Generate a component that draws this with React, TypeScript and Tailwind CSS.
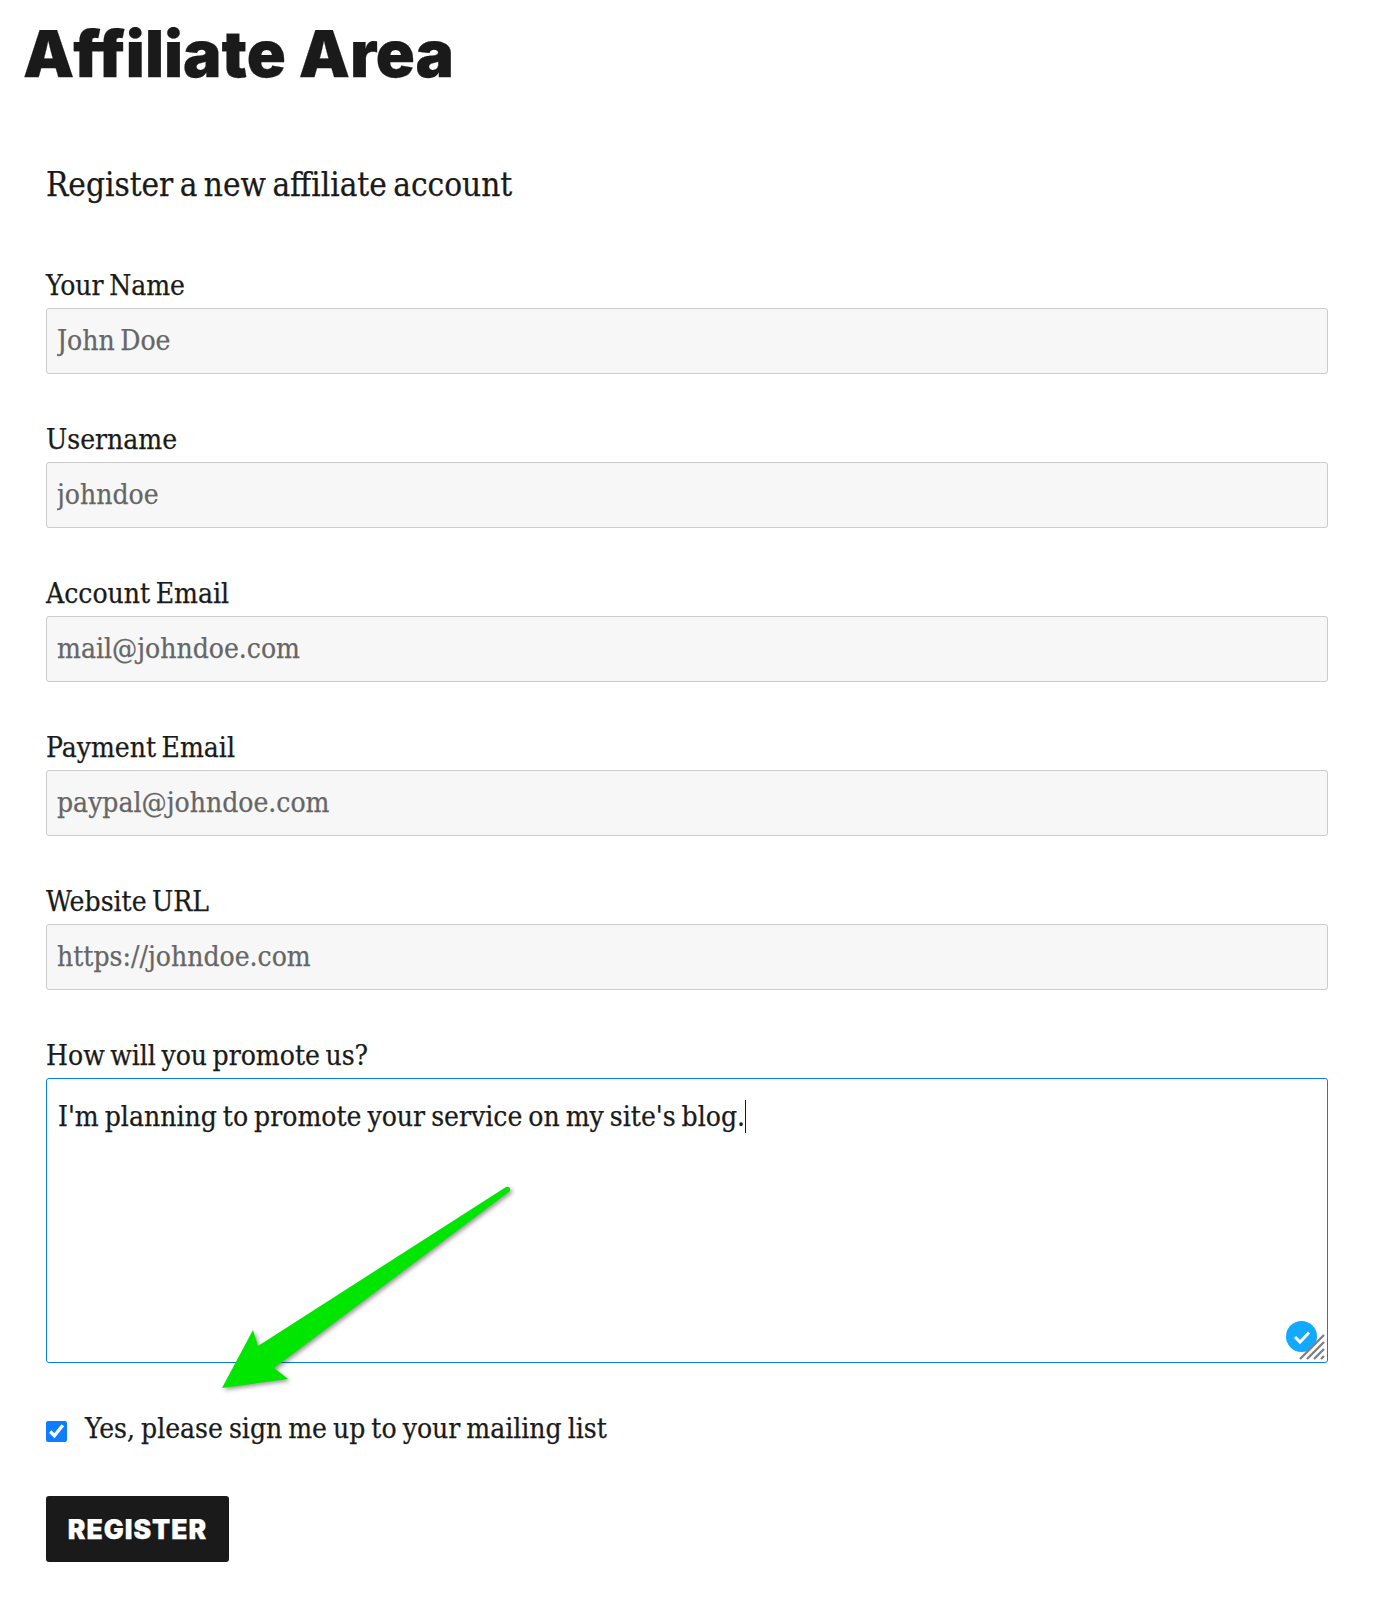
const serif = "font-['DejaVu_Serif_Condensed','Liberation_Serif',serif] [-webkit-text-stroke:0.25px]";

const fields = [
  { label: "Your Name", placeholder: "John Doe" },
  { label: "Username", placeholder: "johndoe" },
  { label: "Account Email", placeholder: "mail@johndoe.com" },
  { label: "Payment Email", placeholder: "paypal@johndoe.com" },
  { label: "Website URL", placeholder: "https://johndoe.com" },
];

function Field({ label, placeholder }: { label: string; placeholder: string }) {
  return (
    <div className="flex flex-col">
      <label className="h-[44px] pt-[6px] text-[28px] leading-[32px] text-[#1a1a1a] [word-spacing:-2.5px]">{label}</label>
      <input
        type="text"
        readOnly
        placeholder={placeholder}
        className={`h-[66px] w-full rounded-[3px] border border-[#cccccc] bg-[#f7f7f7] px-[10px] pb-[1px] text-[28px] outline-none [word-spacing:-2.5px] placeholder:text-[#666666] ${serif}`}
      />
    </div>
  );
}

function ResizeGrip() {
  return (
    <svg className="absolute bottom-[2px] right-[2px]" width="26" height="26" viewBox="0 0 26 26" fill="none" stroke="#808080" strokeWidth="2.4">
      <path d="M1 25 25 1M8 25 25 8M15 25 25 15M22 25 25 22" />
    </svg>
  );
}

function CheckBadge() {
  return (
    <svg className="absolute bottom-[10px] right-[10px]" width="31" height="31" viewBox="0 0 31 31">
      <circle cx="15.5" cy="15.5" r="15.5" fill="#12a9ff" />
      <path d="M9 16l5 5 9-9.5" fill="none" stroke="#ffffff" strokeWidth="3" />
    </svg>
  );
}

function Arrow() {
  return (
    <svg className="absolute left-[210px] top-[1180px] drop-shadow-[2px_2px_2px_rgba(0,0,0,0.4)]" width="310" height="215" viewBox="210 1180 310 215">
      <path
        d="M222 1388 253 1330 258 1346 506 1187Q511 1186 510 1191L282 1362 274 1368 288 1379Z"
        fill="#00e600"
      />
    </svg>
  );
}

export default function App() {
  return (
    <div className={`relative flex h-[1608px] w-[1394px] flex-col overflow-hidden bg-white text-[#1a1a1a] ${serif}`}>
      <h1 className="pl-[23px] pt-[14px] font-['Inter',sans-serif] text-[64.5px] font-black leading-[80px] text-[#1a1a1a]">Affiliate Area</h1>
      <div className="flex flex-col pl-[46px] pr-[66px] pt-[69px]">
        <h2 className="pb-[57px] text-[33px] font-normal leading-[44px] [word-spacing:-3px]">Register a new affiliate account</h2>
        <div className="flex flex-col gap-[44px]">
          {fields.map((f) => (
            <Field key={f.label} label={f.label} placeholder={f.placeholder} />
          ))}
          <div className="flex flex-col">
            <label className="h-[44px] pt-[6px] text-[28px] leading-[32px] [word-spacing:-2.5px]">How will you promote us?</label>
            <div className="relative h-[285px] rounded-[3px] border border-[#0a7fd6] px-[11px] pt-[20px] text-[28px] leading-[36px] [word-spacing:-2px]">
              <span className="border-r border-[#1a1a1a]">I'm planning to promote your service on my site's blog.</span>
              <CheckBadge />
              <ResizeGrip />
            </div>
          </div>
        </div>
        <div className="flex items-center gap-[18px] pt-[48px]">
          <input type="checkbox" readOnly checked className="h-[21px] w-[21px] accent-[#0f7dff]" />
          <span className="pb-[4px] text-[28px] leading-[36px] [word-spacing:-2px]">Yes, please sign me up to your mailing list</span>
        </div>
        <div className="flex pt-[45px]">
          <button type="button" className="h-[66px] w-[183px] rounded-[3px] bg-[#1a1a1a] pt-[2px] font-['Inter',sans-serif] text-[26.5px] font-black tracking-[1px] text-white">
            REGISTER
          </button>
        </div>
      </div>
      <Arrow />
    </div>
  );
}
